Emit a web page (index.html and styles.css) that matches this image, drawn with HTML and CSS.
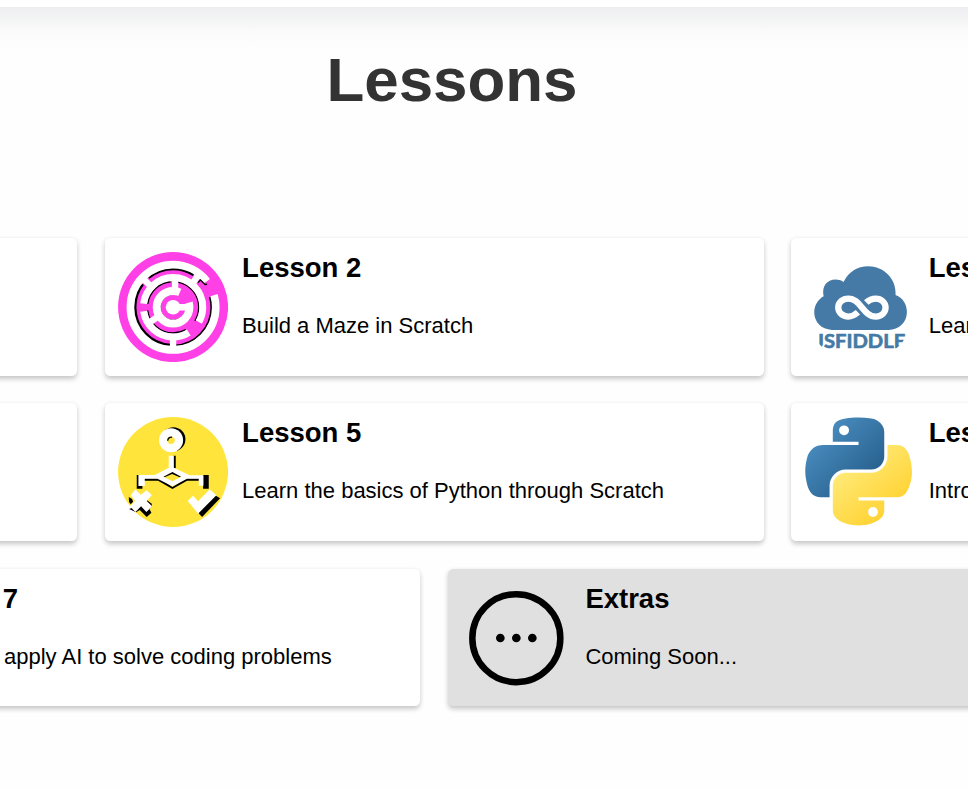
FILE: index.html
```html
<!DOCTYPE html>
<html lang="en">
<head>
<meta charset="utf-8">
<title>Lessons</title>
<link rel="stylesheet" href="styles.css">
</head>
<body>
<header class="topbar"></header>
<main>
<h1 class="title">Lessons</h1>
<section class="lessons">
<div class="row">
<article class="card"></article>
<article class="card">
<svg class="icon" viewBox="30.75 29.25 330 330">
<circle cx="196" cy="194.500" r="165" fill="#ff40e6"/>
<g fill="none" stroke="#000">
<circle cx="196" cy="195" r="115" stroke-width="6" pathLength="360" stroke-dasharray="103 257" stroke-dashoffset="16"/>
<circle cx="196" cy="195" r="115" stroke-width="10" pathLength="360" stroke-dasharray="123 237" stroke-dashoffset="-94"/>
<circle cx="196" cy="195" r="115" stroke-width="8" pathLength="360" stroke-dasharray="72 288" stroke-dashoffset="-230"/>
<circle cx="196" cy="195" r="77" stroke-width="5" pathLength="360" stroke-dasharray="76 284" stroke-dashoffset="-187"/>
<circle cx="196" cy="195" r="77" stroke-width="4" pathLength="360" stroke-dasharray="112 248" stroke-dashoffset="80"/>
<circle cx="196" cy="195" r="77" stroke-width="4" pathLength="360" stroke-dasharray="112 248" stroke-dashoffset="-60"/>
<circle cx="196" cy="195" r="39" stroke-width="3" pathLength="360" stroke-dasharray="268 92" stroke-dashoffset="-20"/>
</g>
<g fill="none" stroke="#fff">
<circle cx="196" cy="195" r="128" stroke-width="23" pathLength="360" stroke-dasharray="339 21" stroke-dashoffset="17"/>
<circle cx="196" cy="195" r="89" stroke-width="21" pathLength="360" stroke-dasharray="203 157" stroke-dashoffset="-187"/>
<circle cx="196" cy="195" r="89" stroke-width="21" pathLength="360" stroke-dasharray="114 246" stroke-dashoffset="-58"/>
<circle cx="196" cy="195" r="49" stroke-width="24" pathLength="360" stroke-dasharray="311 49" stroke-dashoffset="18"/>
<path d="M196 285v36M105 108l32 32M254 124l20-29M202 105v42M146 226l-22 16M196 195h50" stroke-width="19"/>
</g>
<path d="M271 121l7-8 14 14 6-1" fill="none" stroke="#000" stroke-width="4"/>
<circle cx="196" cy="195" r="22" fill="#fff"/>
</svg>
<div class="text"><h2>Lesson 2</h2><p>Build a Maze in Scratch</p></div>
</article>
<article class="card">
<svg class="icon" viewBox="29.25 29.25 330 330">
<defs><clipPath id="round"><circle cx="194.250" cy="194.250" r="165"/></clipPath></defs>
<g clip-path="url(#round)">
<path d="M110 263C78 262 57 239 57 211c0-22 11-39 28-49-6-30 10-50 36-50 9 0 16 2 24 7 16-31 41-47 74-47 46 0 85 37 82 86 22 8 34 28 34 51 0 31-24 53-55 54z" fill="#467aa6"/>
<path d="M188 210c-9 8-17 13-29 13-17 0-30-12-30-27s13-27 30-27c38 0 44 54 83 54 16 0 29-12 29-27s-13-27-29-27c-12 0-21 4-29 12" fill="none" stroke="#fff" stroke-width="19"/>
<text class="fiddle" x="60" y="317" textLength="270" lengthAdjust="spacingAndGlyphs">JSFIDDLE</text>
</g>
</svg>
<div class="text"><h2>Lesson 3</h2><p>Learn</p></div>
</article>
</div>
<div class="row">
<article class="card"></article>
<article class="card">
<svg class="icon" viewBox="30.75 28 330 330">
<circle cx="196" cy="193" r="165" fill="#ffe53b"/>
<circle cx="197" cy="95" r="36" fill="#000"/>
<circle cx="190" cy="98" r="36" fill="#fff"/>
<circle cx="190" cy="98" r="11" fill="#ffe53b"/>
<path d="M180 99a10 10 0 0 1 13-10" fill="none" stroke="#000" stroke-width="4"/>
<path d="M197 144h7v38h-7zM87 202h17v41H87zM286 202h17v41h-17zM104 212h52l38 26 43-26h44v7h-43l-44 25-43-25h-47zM164 205l29-16 29 16-6 4-23-10-23 10z" fill="#000"/>
<path d="M183 144h15v36l48 23h41v31h-14v-21h-35l-44 23-45-23h-38v22H92v-33h49l42-22zM194 193l-27 14 27 14 26-14z" fill="#fff" fill-rule="evenodd"/>
<path d="M63 268l10 6 3 8-7 8-5-7zM64 304l21 10 11-7 21 21 14-13-6-11 7-8v-8l-19-14-15 17z" fill="#000"/>
<path d="M83 245l16 16 18-13 15 14-15 18 16 16-17 17-16-17-17 17-17-17 16-16-13-17z" fill="#fff"/>
<path d="M304 263l17-1 16 10-54 56-22-24-7-12z" fill="#000"/>
<path d="M240 280l16-16 15 17 35-36 20 18-55 55z" fill="#fff"/>
</svg>
<div class="text"><h2>Lesson 5</h2><p>Learn the basics of Python through Scratch</p></div>
</article>
<article class="card">
<svg class="icon" viewBox="29.25 28 330 330">
<defs>
<linearGradient id="blue" x1="0" y1="0" x2=".8" y2=".8"><stop stop-color="#5299cc"/><stop offset="1" stop-color="#28618f"/></linearGradient>
<linearGradient id="yellow" x1=".25" y1=".25" x2=".72" y2=".82"><stop stop-color="#ffe873"/><stop offset="1" stop-color="#ffd334"/></linearGradient>
</defs>
<g transform="translate(30 29.500) scale(2.880)">
<path fill="url(#blue)" fill-rule="evenodd" d="M54.919 0C50.335.022 45.958.413 42.106 1.095 30.760 3.099 28.700 7.295 28.700 15.032V25.251H55.513V28.657H18.638C10.845 28.657 4.022 33.341 1.888 42.251-.574 52.464-.683 58.837 1.888 69.501 3.793 77.439 8.345 83.095 16.138 83.095H25.356V70.845C25.356 61.995 33.013 54.188 42.106 54.188H68.888C76.342 54.188 82.294 48.050 82.294 40.563V15.032C82.294 7.766 76.164 2.307 68.888 1.095 64.282.328 59.502-.020 54.919 0zM40.419 8.220A5.070 5.110 0 1 1 40.419 18.438 5.070 5.110 0 1 1 40.419 8.220z"/>
<path fill="url(#yellow)" fill-rule="evenodd" d="M85.638 28.657V40.563C85.638 49.794 77.812 57.563 68.888 57.563H42.106C34.770 57.563 28.700 63.842 28.700 71.188V96.720C28.700 103.986 35.019 108.260 42.106 110.344 50.593 112.840 58.731 113.291 68.888 110.344 75.639 108.389 82.294 104.455 82.294 96.720V86.501H55.512V83.095H95.700C103.492 83.095 106.396 77.660 109.106 69.501 111.906 61.102 111.786 53.025 109.106 42.251 107.180 34.493 103.502 28.657 95.700 28.657zM70.575 93.313A5.070 5.110 0 1 1 70.575 103.532 5.070 5.110 0 1 1 70.575 93.313z"/>
</g>
</svg>
<div class="text"><h2>Lesson 6</h2><p>Introduction</p></div>
</article>
</div>
<div class="row">
<article class="card">
<div class="icon"></div>
<div class="text"><h2>Lesson 7</h2><p>Learn and apply AI to solve coding problems</p></div>
</article>
<article class="card card-soon">
<svg class="icon" viewBox="65 69.500 330 330">
<circle cx="228" cy="235" r="132" fill="none" stroke="#000" stroke-width="19.500"/>
<circle cx="180" cy="234.500" r="13"/><circle cx="228" cy="234.500" r="13"/><circle cx="276" cy="234.500" r="13"/>
</svg>
<div class="text"><h2>Extras</h2><p>Coming Soon...</p></div>
</article>
</div>
</section>
</main>
</body>
</html>
```
FILE: styles.css
```css
* { box-sizing: border-box; }
html, body { margin: 0; height: 100%; overflow: hidden; }
body {
  background: #fefefe;
  color: #000;
  font-family: "Liberation Sans", Arial, sans-serif;
  font-size: 22px;
}
.topbar {
  height: 6.5px;
  background: #fff;
}
main {
  padding-top: 38px;
  background: linear-gradient(#eeeef0, #f3f3f4 10px, #fafbfa 25px, #fdfdfd 34px, #fefefe 45px);
}
.title {
  margin: 0;
  width: 904px;
  height: 70px;
  line-height: 70px;
  text-align: center;
  font-size: 61.9px;
  color: #333;
}
.lessons {
  width: 868.25px;
  margin-top: 123.5px;
  display: flex;
  flex-direction: column;
  gap: 27.9px;
}
.row {
  display: flex;
  justify-content: center;
  gap: 27.5px;
}
.card {
  flex: none;
  display: flex;
  gap: 13.75px;
  width: 659.1px;
  height: 137.5px;
  padding: 13.75px;
  border-radius: 5.5px;
  background: #fff;
  box-shadow: 0 2.75px 5.5px rgba(0, 0, 0, .22);
}
.card-soon { background: #e0e0e0; }
.icon {
  flex: none;
  width: 110px;
  height: 110px;
}
.text { white-space: nowrap; }
h2 {
  margin: 0;
  font-size: 27.5px;
  line-height: 32px;
}
p {
  margin: 29px 0 0;
  line-height: 26px;
}
.fiddle {
  font-family: Lato, sans-serif;
  font-weight: 700;
  font-size: 59px;
  fill: #467aa6;
  stroke: #467aa6;
  stroke-width: 2px;
}
```
